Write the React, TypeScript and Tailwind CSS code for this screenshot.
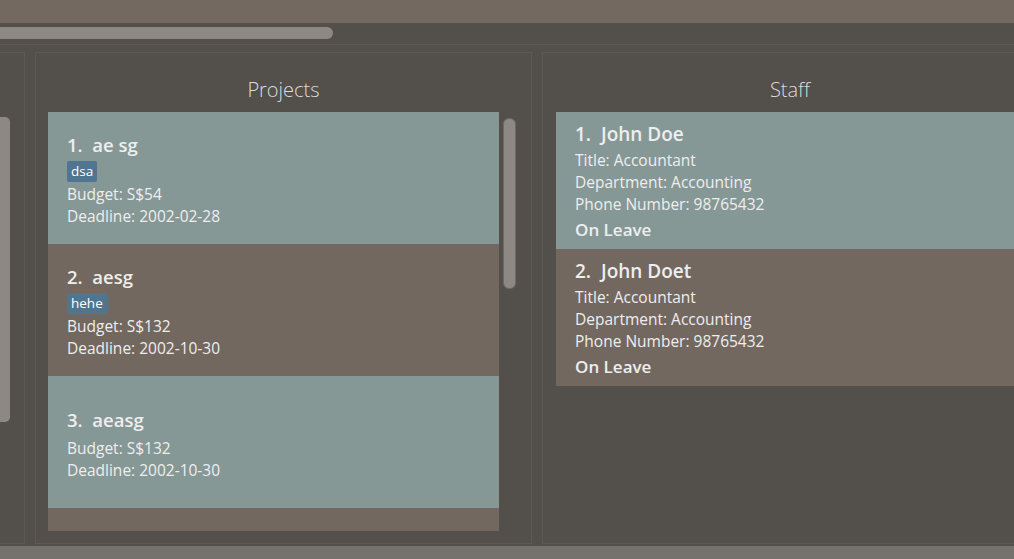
import React from 'react';

type Project = { id: number; name: string; tag?: string; budget: string; deadline: string };
type Staff = { id: number; name: string; title: string; dept: string; phone: string; status: string };

const projects: Project[] = [
  { id: 1, name: 'ae sg', tag: 'dsa', budget: 'S$54', deadline: '2002-02-28' },
  { id: 2, name: 'aesg', tag: 'hehe', budget: 'S$132', deadline: '2002-10-30' },
  { id: 3, name: 'aeasg', budget: 'S$132', deadline: '2002-10-30' },
];

const staff: Staff[] = [
  { id: 1, name: 'John Doe', title: 'Accountant', dept: 'Accounting', phone: '98765432', status: 'On Leave' },
  { id: 2, name: 'John Doet', title: 'Accountant', dept: 'Accounting', phone: '98765432', status: 'On Leave' },
];

const font = { fontFamily: '"Open Sans", "Noto Sans", sans-serif' };

const ProjectCard = ({ p, i }: { p: Project; i: number }) => (
  <div
    className={`h-[132px] flex flex-col justify-center pl-[19px] text-[#eeeeee] ${
      i % 2 === 0 ? 'bg-[#869896]' : 'bg-[#73685f]'
    }`}
  >
    <p className="text-[18.5px] font-semibold leading-[32px] whitespace-pre">{`${p.id}.  ${p.name}`}</p>
    {p.tag && (
      <div className="flex">
        <span className="bg-[#4f7590] text-white text-[13.5px] leading-[21px] px-[4px] rounded-[2px]">{p.tag}</span>
      </div>
    )}
    <p className="text-[15.5px] leading-[22px] mt-[1px]">Budget: {p.budget}</p>
    <p className="text-[15.5px] leading-[22px]">Deadline: {p.deadline}</p>
  </div>
);

const StaffCard = ({ s, i }: { s: Staff; i: number }) => (
  <div
    className={`h-[137px] pl-[19px] pt-[9px] text-[#eeeeee] ${
      i % 2 === 0 ? 'bg-[#869896]' : 'bg-[#73685f]'
    }`}
  >
    <p className="text-[19px] font-semibold leading-[26px] whitespace-pre">{`${s.id}.  ${s.name}`}</p>
    <p className="text-[15.5px] leading-[22px] mt-[2px]">Title: {s.title}</p>
    <p className="text-[15.5px] leading-[22px]">Department: {s.dept}</p>
    <p className="text-[15.5px] leading-[22px]">Phone Number: {s.phone}</p>
    <p className="text-[17px] font-semibold leading-[26px] mt-[2px]">{s.status}</p>
  </div>
);

export default function App() {
  return (
    <div className="w-[1014px] h-[559px] overflow-hidden bg-[#534f4b] flex flex-col" style={font}>
      {/* Top bar */}
      <div className="h-[23px] flex-shrink-0 bg-[#736960]" />

      {/* Horizontal scroll */}
      <div className="h-[21px] flex-shrink-0 pt-[4px]">
        <div className="w-[333px] h-[12px] bg-[#8d8883] rounded-r-[6px]" />
      </div>
      <div className="h-px flex-shrink-0 bg-[#5e5955]" />
      <div className="h-[7px] flex-shrink-0" />

      {/* Panels */}
      <div className="flex h-[492px] flex-shrink-0">
        {/* Left partial panel */}
        <div className="w-[25px] flex-shrink-0 border-t border-r border-b border-[#5e5955] pt-[64px]">
          <div className="w-[10px] h-[305px] bg-[#8d8883] rounded-r-[5px]" />
        </div>

        {/* Projects */}
        <div className="w-[497px] ml-[10px] flex-shrink-0 border border-[#5e5955] flex flex-col">
          <div className="h-[59px] flex items-center justify-center pt-[14px]">
            <h2 className="text-[20px] font-light text-[#dcdcdc]">Projects</h2>
          </div>
          <div className="flex pl-[12px]">
            <div className="w-[451px] h-[419px] overflow-hidden">
              {projects.map((p, i) => (
                <ProjectCard key={p.id} p={p} i={i} />
              ))}
              <div className="h-[132px] bg-[#73685f]" />
            </div>
            <div className="ml-[4px] pt-[6px]">
              <div className="w-[13px] h-[171px] bg-[#8d8883] border border-[#6e6964] rounded-[6px]" />
            </div>
          </div>
        </div>

        {/* Staff */}
        <div className="w-[496px] ml-[10px] flex-shrink-0 border border-[#5e5955] flex flex-col">
          <div className="h-[59px] flex items-center justify-center pt-[14px]">
            <h2 className="text-[20px] font-light text-[#dcdcdc]">Staff</h2>
          </div>
          <div className="pl-[13px] w-[520px]">
            {staff.map((s, i) => (
              <StaffCard key={s.id} s={s} i={i} />
            ))}
          </div>
        </div>
      </div>

      <div className="h-[2px] flex-shrink-0" />
      <div className="flex-1 bg-[#75716c]" />
    </div>
  );
}
